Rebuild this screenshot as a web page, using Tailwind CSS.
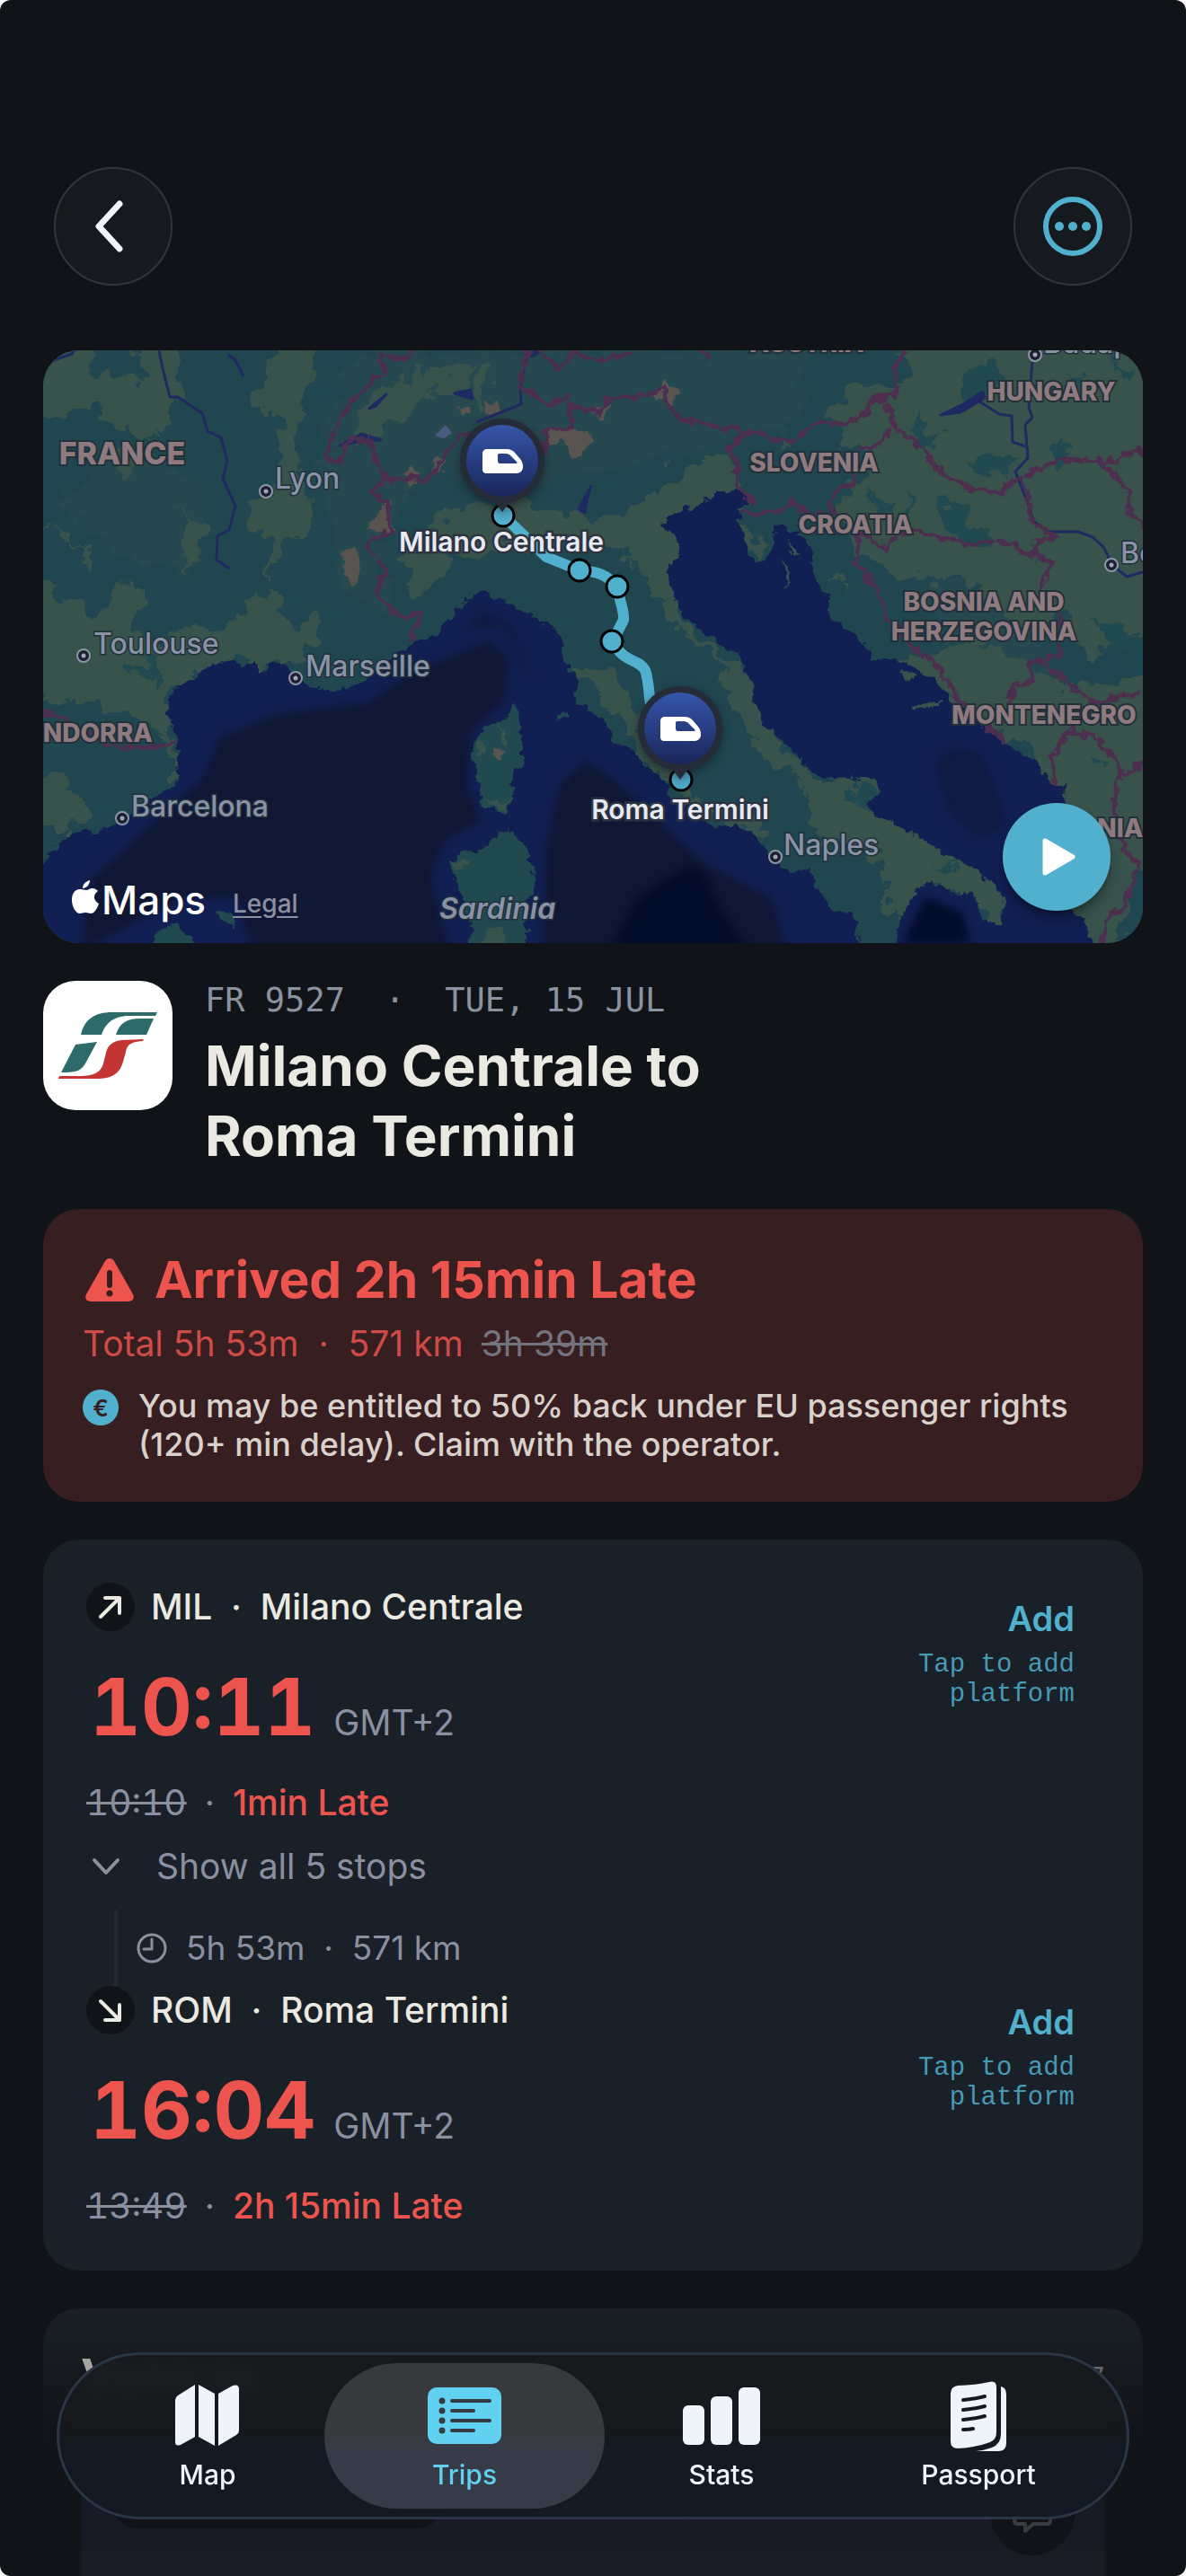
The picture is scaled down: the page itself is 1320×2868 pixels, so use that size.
<!DOCTYPE html>
<html lang="en">
<head>
    <meta charset="UTF-8">
    <meta name="viewport" content="width=device-width, initial-scale=1.0">
    <title>FR 9527</title>
    <script src="https://cdn.jsdelivr.net/npm/@tailwindcss/browser@4"></script>
</head>
<body class="bg-white font-['Inter','Liberation_Sans',sans-serif]">
<div class="flex min-h-screen flex-col overflow-hidden rounded-xl bg-[#101418] px-12 text-[#eae9e2]">

    <header class="flex items-center justify-between px-3 pt-[186px] pb-[72px]">
        <button aria-label="Back" class="flex size-[132px] items-center justify-center rounded-full border-2 border-[#2f363d] bg-[#16191d]">
            <svg class="size-[72px]" viewBox="0 0 72 72" fill="none" stroke="#f1f4fa" stroke-width="7" stroke-linecap="round" stroke-linejoin="round"><path d="M43 11 20 36 43 61"/></svg>
        </button>
        <button aria-label="More" class="flex size-[132px] items-center justify-center rounded-full border-2 border-[#2f363d] bg-[#16191d]">
            <svg class="size-[72px]" viewBox="0 0 72 72"><circle cx="36" cy="36" r="30" fill="none" stroke="#52b0cf" stroke-width="6"/><g fill="#52b0cf"><circle cx="21" cy="36" r="5"/><circle cx="36" cy="36" r="5"/><circle cx="51" cy="36" r="5"/></g></svg>
        </button>
    </header>

    <main class="flex grow flex-col">
        <!-- route map -->
        <section class="relative overflow-hidden rounded-[40px] bg-[#1f464f]">
            <svg class="block h-auto w-full" viewBox="48 390 1224 660" role="img" aria-label="Route map">
                <defs>
                    <filter id="rough" x="-5%" y="-5%" width="110%" height="110%" color-interpolation-filters="sRGB"><feTurbulence type="fractalNoise" baseFrequency=".04" numOctaves="4" seed="4"/><feDisplacementMap in="SourceGraphic" scale="44" xChannelSelector="R" yChannelSelector="G"/></filter>
                    <filter id="coast" x="-5%" y="-5%" width="110%" height="110%" color-interpolation-filters="sRGB"><feTurbulence type="fractalNoise" baseFrequency=".09" numOctaves="3" seed="9"/><feDisplacementMap in="SourceGraphic" scale="14" xChannelSelector="R" yChannelSelector="G"/></filter>
                    <filter id="soft" x="-10%" y="-10%" width="120%" height="120%" color-interpolation-filters="sRGB"><feGaussianBlur stdDeviation="5"/></filter>
                    <filter id="glow" x="-30%" y="-30%" width="160%" height="160%" color-interpolation-filters="sRGB"><feDropShadow dx="0" dy="4" stdDeviation="6" flood-color="#0b1018" flood-opacity=".5"/></filter>
                    <linearGradient id="pin" x1="0" y1="0" x2="0" y2="1"><stop offset="0" stop-color="#3655aa"/><stop offset="1" stop-color="#1a2659"/></linearGradient>
                    <g id="train">
                        <path d="M-9 45 0 57 9 45Z" fill="#262b38"/>
                        <circle r="47" fill="#262b38"/>
                        <circle r="40" fill="url(#pin)"/>
                        <path fill="#fff" fill-rule="evenodd" d="M-17-13H5C9-13 11-12 14-9L20-2C23 2 23 5 23 7 23 11 20 14 16 14H-17C-21 14-22 12-22 9V-8C-22-11-20-13-17-13ZM-3-8C-5-8-5-7-5-6V0C-5 2-4 3-3 3H15C17 3 17 2 16 1L9-6C8-7 6-8 4-8Z"/>
                    </g>
                    <g id="town"><circle r="7" fill="#1c2030" stroke="#8e97a8" stroke-width="2"/><circle r="2.500" fill="#a0a8b8"/></g>
                </defs>
                <path fill="#204750" d="M0 340H1320V1100H0Z"/>
                <path fill="#26494f" filter="url(#rough)" d="M400 390H900L890 470 780 500 600 540 480 520 420 600 440 700 380 650 350 500ZM60 560 140 500 230 540 220 640 140 620ZM1030 640 1150 680 1180 800 1080 760Z"/>
                <!-- lowlands -->
                <g fill="#38534c" filter="url(#rough)">
                    <path d="M30 370H100L104 415 152 420 160 380H206L195 440 185 475 165 490 120 465 90 450 60 462 30 455ZM130 500 165 495 160 520 140 525ZM50 585 80 590 84 605 60 605ZM205 560 222 600 214 640 204 600ZM84 605 106 625 100 640 84 625ZM140 640 150 655 145 665Z"/>
                    <path d="M305 380 347 385 350 423 335 463 328 520 347 567 330 590 309 620 297 655 301 597 276 570 308 545 314 470 288 447Z"/>
                    <path d="M30 625 74 663 111 692 132 645 160 670 140 700 180 716 220 690 242 713 276 670 309 655 330 700 350 680 372 690 350 715 330 745 250 740 190 775 200 830 170 800 120 790 30 770Z"/>
                    <path d="M394 480 419 443 461 417 516 405 530 420 478 435 444 462 419 480ZM540 395 552 430 540 460 530 430Z"/>
                    <path d="M444 613 482 577 516 567 587 558 640 575 700 570 745 533 796 507 820 520 830 560 760 580 765 700 834 753 865 820 900 865 975 862 985 905 1100 970 1130 1010 1115 1050 1082 1000 1036 985 1006 1030 985 990 985 955 905 935 900 880 850 840 830 800 800 740 740 690 715 640 690 612 620 600 560 610 490 630 482 668 462 655Z"/>
                    <path d="M640 740 665 780 690 800 725 855 770 900 850 935 850 915 780 890 722 830 700 770 680 740Z"/>
                    <path d="M1010 370H1300V700L1210 725 1180 690 1130 700 1080 650 1000 640 950 610 938 570 965 520 940 480 925 460 955 425 1000 440Z"/>
                    <path d="M1000 740 1080 710 1190 770 1300 750V890L1240 1060H1200L1180 900 1150 840 1080 795ZM875 480 885 495 870 500ZM928 640 940 650 932 660ZM826 585 850 600 844 630 830 610Z"/>
                    <path d="M30 870 88 873 100 890 80 925 30 915ZM185 820 200 830 205 870 190 860ZM60 940 75 925 80 930Z"/>
                </g>
                <g fill="#204a50" filter="url(#rough)">
                    <path d="M1060 430 1100 400 1120 410 1100 440 1070 450ZM1020 460 1050 480 1030 500 1015 480ZM1078 510 1110 500 1130 520 1090 530ZM1160 500 1180 485 1195 510 1175 520ZM1035 545 1100 590 1110 605 1070 610 1045 580ZM970 550 985 560 980 580 965 570ZM1010 550 1020 565 1010 575ZM1190 410 1210 420 1200 440ZM1215 690 1260 700 1270 740 1240 720ZM140 740 190 735 170 760ZM950 870 980 880 970 895 945 890ZM1045 960 1065 965 1055 975ZM1220 840 1235 845 1230 860ZM1240 400 1260 410 1250 420Z"/>
                </g>
                <!-- high peaks -->
                <g fill="#595450" filter="url(#coast)">
                    <path d="M431 556 440 590 424 594 408 588 420 572ZM380 612 398 610 402 636 394 650 384 640ZM449 525 460 520 466 534 454 544ZM484 510 498 506 492 524 478 530ZM510 453 524 450 526 462 512 460ZM536 450 558 448 556 460 540 462ZM606 475 640 478 660 488 640 510 626 490 606 500ZM655 456 680 450 670 468ZM724 440 742 424 758 436 744 450Z"/>
                </g>
                <!-- seas -->
                <g fill="#121f52" filter="url(#coast)">
                    <path d="M20 985 59 950 80 928 107 925 135 917 166 890 200 873 196 843 198 827 189 807 187 780 191 770 217 755 229 743 246 735 267 740 280 735 288 747 309 737 326 747 343 763 377 771 402 760 419 747 436 733 461 715 486 707 501 690 516 670 535 660 553 665 579 680 604 693 623 703 627 720 629 740 642 753 640 780 659 793 676 807 680 827 703 833 720 853 743 870 747 887 770 900 796 920 821 920 838 927 846 943 863 957 876 970 901 968 909 990 926 1013 951 1018 960 1080H20Z"/>
                    <path d="M1002 1080 998 1040 1006 1013 1019 990 1036 980 1061 995 1082 997 1095 1023 1109 1033 1120 1010 1113 993 1090 970 1052 950 1015 927 977 910 964 893 979 880 972 865 943 867 914 865 897 853 884 837 855 813 842 787 834 753 825 733 800 717 787 707 762 690 752 670 745 647 743 628 760 618 749 597 737 583 745 573 775 563 796 550 821 545 836 557 821 567 823 587 831 610 842 628 850 623 861 607 865 583 884 593 903 607 905 630 909 650 926 667 920 680 943 703 964 718 972 735 998 735 1036 753 1057 777 1082 800 1120 827 1158 850 1170 873 1185 873 1187 897 1187 1010 1208 1023 1212 1043 1221 1080Z"/>
                </g>
                <g filter="url(#soft)">
                    <path fill="#101734" d="M225 867 246 820 309 795 410 782 461 748 545 713 566 735 562 780 524 815 520 877 536 915 495 935 480 977 500 1060H280L265 1000 200 1000 90 1060 100 980 150 935ZM604 1060 608 943 621 877 650 847 682 867 745 925 783 960 859 1000 876 1060Z"/>
                    <path fill="#101a42" d="M520 700 535 678 570 695 590 760 560 700ZM1040 850 1060 832 1090 836 1110 880 1120 920 1090 935 1055 905Z"/>
                    <path fill="#020b29" d="M678 1060 707 1003 733 983 770 963 785 973 800 1007 834 1060ZM1005 1050 1030 1000 1070 1015 1080 1050Z"/>
                </g>
                <g fill="#204a50" filter="url(#coast)">
                    <path d="M572 782 577 797 581 817 581 853 572 860 570 890 560 907 539 897 532 870 528 850 526 827 541 810 562 802 568 790ZM564 923 583 940 589 957 598 980 587 1003 587 1080H520L524 1030 509 987 501 957 541 943ZM156 1080 179 1032 196 1030 213 1043 213 1080ZM240 1017 255 1017 265 1032 252 1028ZM617 797 634 794 632 799 620 801Z"/>
                    <path fill="#38534c" d="M556 806 566 815 560 835ZM530 828 540 825 534 848ZM541 890 568 892 558 904ZM503 957 520 958 510 970ZM876 600 890 620 884 622ZM870 620 880 640 876 655ZM998 747 1015 748 1018 756 1004 757ZM1013 784 1050 780 1046 786 1018 788ZM1212 1028 1224 1034 1216 1044ZM545 1034 560 1030 560 1060H530Z"/>
                    <path fill="#595450" d="M553 832 562 838 556 846 548 842Z"/>
                </g>
                <!-- rivers and lakes -->
                <g fill="none" stroke="#1f2a63" stroke-width="3" stroke-linejoin="round">
                    <path d="M177 390 181 410 189 442H198L225 460 231 480 246 487 253 513 248 533 262 563 255 590 242 597 241 623 255 633M254 395 262 401 271 419M48 405 80 394 84 388M587 395 579 430 580 450 530 470"/>
                    <path d="M1149 403 1145 453 1149 465 1141 473 1144 510 1130 525 1145 563 1150 580 1166 592H1200L1216 598 1229 610 1237 628 1254 642 1272 637M1090 447 1112 461 1126 463 1127 492 1141 497"/>
                    <path fill="#1f2a63" d="M1047 462 1072 450 1094 436 1096 443 1069 459ZM378 496 402 483 424 490 402 491ZM411 455 430 439 418 452ZM658 541 644 567 651 571 654 553ZM583 391H602L592 397ZM506 438 524 434 526 444Z"/>
                    <path fill="#4b5a80" stroke="none" d="M484 485 496 473 503 482 494 488Z"/>
                </g>
                <!-- country borders -->
                <g fill="none" stroke="#4c2f4f" stroke-width="5" stroke-linejoin="round" filter="url(#coast)">
                    <path d="M457 713 469 683 448 687 423 667 419 647 431 637 406 607 436 590 431 563 415 547 429 533 415 503 410 487 389 490 377 513 364 513 372 477 394 443 429 410 421 403 427 395 452 400 461 385"/>
                    <path d="M429 533 478 533 495 507 511 487 550 480 600 495 608 507V477H636L633 450 667 460 678 443 716 440 741 432 739 447 758 467 829 480 880 492 909 470 939 472 964 463 970 445 998 440 996 407 1010 385M587 385 579 430 612 452 633 440M600 385 621 413 640 393 667 403 703 393M778 390 790 400"/>
                    <path d="M829 480 810 500 825 517 817 527 823 543 842 562M823 572 867 570 882 557 897 573 926 573V550L949 538 954 503 985 490 989 477M985 447 998 480 1019 493 1048 527 1078 543 1111 550 1132 533 1179 512 1246 513 1263 500 1280 505M1225 513 1257 547V570L1280 592"/>
                    <path d="M1137 533 1145 563 1149 580 1175 597 1153 603V620L1137 617 1128 603 1082 607 1027 592 998 593 987 613 968 597 954 593V627L977 657 985 687 1015 717 1044 743 1069 783 1120 827M1153 617 1170 627 1158 660 1183 690 1179 730 1145 737 1149 757 1128 763 1116 807M1162 738 1191 763 1221 783 1270 770M1221 783 1191 813 1170 843 1172 873M1191 813 1217 820 1246 853 1238 900 1250 943 1267 963 1250 1010 1229 1027 1225 1060M1246 867 1280 845M40 790 78 803 124 830 166 833 196 827"/>
                </g>

                <path d="M560 574 587 600 608 620 645 635C665 636 675 640 687 653 690 672 695 680 694 690L682 714C695 740 710 732 718 746 723 760 722 780 726 795" fill="none" stroke="#52b0cf" stroke-width="12" stroke-linejoin="round"/>

                <g fill="#8f7a80" stroke="#22303a" stroke-width="4" paint-order="stroke" font-size="28" font-weight="800" text-anchor="middle">
                    <text x="136" y="517" font-size="34">FRANCE</text>
                    <text x="898" y="392">AUSTRIA</text>
                    <text x="1170" y="446">HUNGARY</text>
                    <text x="906" y="525">SLOVENIA</text>
                    <text x="952" y="594">CROATIA</text>
                    <text x="1095" y="680">BOSNIA AND</text>
                    <text x="1095" y="713">HERZEGOVINA</text>
                    <text x="1162" y="806">MONTENEGRO</text>
                    <text x="98" y="826">ANDORRA</text>
                    <text x="1208" y="932">ALBANIA</text>
                </g>
                <g fill="#8993a5" stroke="#22303a" stroke-width="3" paint-order="stroke" font-size="32" font-weight="500">
                    <text x="306" y="544">Lyon</text>
                    <text x="104" y="728">Toulouse</text>
                    <text x="340" y="753">Marseille</text>
                    <text x="146" y="909">Barcelona</text>
                    <text x="872" y="952">Naples</text>
                    <text x="1161" y="393">Budapest</text>
                    <text x="1247" y="627">Belgrade</text>
                    <text x="489" y="1023" font-weight="600" font-style="italic">Sardinia</text>
                </g>
                <use href="#town" x="296" y="547"/><use href="#town" x="93" y="730"/><use href="#town" x="329" y="755"/><use href="#town" x="136" y="911"/><use href="#town" x="863" y="954"/><use href="#town" x="1152" y="395"/><use href="#town" x="1237" y="629"/>

                <g fill="#52b0cf" stroke="#000" stroke-width="3"><circle cx="560" cy="574" r="12"/><circle cx="645" cy="635" r="12"/><circle cx="687" cy="653" r="12"/><circle cx="681" cy="714" r="12"/><circle cx="758" cy="868" r="12"/></g>
                <use href="#train" x="559" y="513" filter="url(#glow)"/>
                <use href="#train" x="757" y="811" filter="url(#glow)"/>
                <g fill="#e8eaf2" stroke="#2c3442" stroke-width="5" paint-order="stroke" font-size="30" font-weight="600" text-anchor="middle">
                    <text x="558" y="614">Milano Centrale</text>
                    <text x="757" y="912">Roma Termini</text>
                </g>
                <g fill="#fff">
                    <path d="M100 980C100 985 96 989 92 989 92 984 96 981 100 980ZM96 991C98 991 100 989 103 989 106 989 108 991 109 992 103 996 104 1003 110 1006 108 1012 105 1017 101 1017 99 1017 98 1016 95 1016 92 1016 91 1017 89 1017 84 1017 80 1009 80 1002 80 994 84 990 89 990 92 990 94 991 96 991Z"/>
                    <text x="113" y="1018" font-size="44" font-weight="500">Maps</text>
                </g>
            </svg>
            <a href="#" class="absolute bottom-[28px] left-[211px] text-[28px] leading-8 font-medium text-[#8b90a0] underline underline-offset-4">Legal</a>
            <button aria-label="Play trip" class="absolute right-9 bottom-9 flex size-[120px] items-center justify-center rounded-full bg-[#52b0cf] shadow-lg shadow-black/40">
                <svg class="size-[60px]" viewBox="0 0 60 60" fill="#fff" stroke="#fff" stroke-width="5" stroke-linejoin="round"><path d="M17 12V48L48 30Z"/></svg>
            </button>
        </section>

        <!-- train and route -->
        <section class="mt-[42px] flex gap-9">
            <div class="size-[144px] shrink-0 rounded-[36px] bg-white">
                <svg class="size-full" viewBox="0 0 144 144">
                    <g fill="#2d6a6a"><path d="M127 35H77C57 35 46 43 42 60H65C70 46 79 39 97 39H125Z"/><path d="M123 42H108C93 42 85 47 81 60H115Z"/><path d="M36 71 60 68 47 92C42 100 38 102 20 102Z"/></g>
                    <path fill="#c43432" d="M112 65 88 66C77 67 72 72 70 80L67 92C64 102 57 106 40 106H18L17 109H59C76 109 85 104 89 90L92 79C94 71 97 68 111 67Z"/>
                </svg>
            </div>
            <div>
                <p class="font-['DejaVu_Sans_Mono','Liberation_Mono',monospace] text-[37px] leading-[44px] whitespace-pre text-[#8b92a0]">FR 9527  ·  TUE, 15 JUL</p>
                <h1 class="mt-3 text-[62px] leading-[78px] font-bold">Milano Centrale to<br>Roma Termini</h1>
            </div>
        </section>

        <!-- delay notice -->
        <section class="mt-[42px] rounded-[40px] bg-[#371e21] px-11 pt-[43px] pb-[42px]">
            <h2 class="flex items-center gap-5 text-[57px] leading-[72px] font-bold text-[#ed544d]">
                <svg class="size-[60px] shrink-0" viewBox="0 0 60 60"><path fill="#ed544d" d="M25 9C27 5 33 5 35 9L56 46C58 50 56 54 51 54H9C4 54 2 50 4 46Z"/><path d="M30 22V36" stroke="#371e21" stroke-width="6" stroke-linecap="round"/><circle cx="30" cy="45" r="3.500" fill="#371e21"/></svg>
                Arrived 2h 15min Late
            </h2>
            <p class="mt-[11px] flex gap-5 text-[39px] leading-12 text-[#cf4b47]"><span class="whitespace-pre">Total 5h 53m  ·  571 km</span><s class="text-[#74747e]">3h 39m</s></p>
            <div class="mt-6 flex gap-[22px]">
                <span class="mt-[3px] flex size-10 shrink-0 items-center justify-center rounded-full bg-[#52b0cf] text-[26px] font-semibold text-[#371e21]">€</span>
                <p class="text-[36px] leading-[43px] font-medium text-[#d8d2cb]">You may be entitled to 50% back under EU passenger rights<br>(120+ min delay). Claim with the operator.</p>
            </div>
        </section>

        <!-- departure and arrival -->
        <section class="mt-[42px] rounded-[40px] bg-[#1a2027] p-12 text-[39px] leading-12">
            <div class="flex items-start justify-between">
                <div>
                    <h3 class="flex h-[54px] items-center gap-[18px] font-medium"><svg class="size-[54px]" viewBox="0 0 54 54"><circle cx="27" cy="27" r="27" fill="#101418"/><path d="M16 38 37 17M21 17H37V34" fill="none" stroke="#eae9e2" stroke-width="4" stroke-linecap="round" stroke-linejoin="round"/></svg><span class="whitespace-pre">MIL  ·  Milano Centrale</span></h3>
                    <p class="mt-[34px] flex items-baseline gap-5 pl-1"><time class="text-[88px] leading-[100px] font-bold text-[#ed544d] tabular-nums">10:11</time><span class="text-[#8b90a0]">GMT+2</span></p>
                    <p class="mt-[33px] flex gap-5 text-[#8b90a0]"><s class="tabular-nums">10:10</s><span>·</span><span class="font-medium text-[#ed544d]">1min Late</span></p>
                </div>
                <button class="mr-7 pt-4 text-right text-[#52b0cf]">
                    <span class="block text-[38px] font-semibold">Add</span>
                    <span class="mt-[11px] block font-['Liberation_Mono',monospace] text-[29px] leading-[33px] text-[#4799b4]">Tap to add<br>platform</span>
                </button>
            </div>
            <button class="mt-[23px] flex items-center gap-[34px] text-[#8b90a0]"><svg class="size-11" viewBox="0 0 44 44" fill="none" stroke="#8b90a0" stroke-width="4" stroke-linecap="round" stroke-linejoin="round"><path d="M9 15 22 29 35 15"/></svg>Show all 5 stops</button>
            <div class="mt-[25px] ml-[31px] flex h-[84px] items-center gap-5 border-l-4 border-[#252a33] pl-5 text-[37px] text-[#8b90a0]">
                <svg class="size-9" viewBox="0 0 36 36" fill="none" stroke="#8b90a0" stroke-width="3" stroke-linecap="round" stroke-linejoin="round"><circle cx="18" cy="18" r="15"/><path d="M18 8V19H9"/></svg>
                <span class="whitespace-pre">5h 53m  ·  571 km</span>
            </div>
            <div class="flex items-start justify-between">
                <div>
                    <h3 class="flex h-[54px] items-center gap-[18px] font-medium"><svg class="size-[54px]" viewBox="0 0 54 54"><circle cx="27" cy="27" r="27" fill="#101418"/><path d="M16 17 37 38M21 38H37V21" fill="none" stroke="#eae9e2" stroke-width="4" stroke-linecap="round" stroke-linejoin="round"/></svg><span class="whitespace-pre">ROM  ·  Roma Termini</span></h3>
                    <p class="mt-[34px] flex items-baseline gap-5 pl-1"><time class="text-[88px] leading-[100px] font-bold text-[#ed544d] tabular-nums">16:04</time><span class="text-[#8b90a0]">GMT+2</span></p>
                    <p class="mt-[33px] flex gap-5 text-[#8b90a0]"><s class="tabular-nums">13:49</s><span>·</span><span class="font-medium text-[#ed544d]">2h 15min Late</span></p>
                </div>
                <button class="mr-7 pt-4 text-right text-[#52b0cf]">
                    <span class="block text-[38px] font-semibold">Add</span>
                    <span class="mt-[11px] block font-['Liberation_Mono',monospace] text-[29px] leading-[33px] text-[#4799b4]">Tap to add<br>platform</span>
                </button>
            </div>
        </section>

        <!-- vehicle card, runs on under the tab bar -->
        <section class="mt-[42px] flex grow flex-col rounded-t-[40px] bg-linear-to-b from-[#1a1f27] to-[#111418] to-50% px-[42px] pt-11">
            <div class="flex items-center justify-between">
                <h2 class="text-[54px] leading-[64px] font-bold text-[#a5a5a2]">Vehicle</h2>
                <span class="font-['DejaVu_Sans_Mono',monospace] text-[30px] text-[#61666f]">FR 9527</span>
            </div>
            <div class="mt-10 flex h-[130px] grow items-start justify-between bg-linear-to-b from-[#131a24] to-[#1a1b25] px-[34px] pt-[33px]">
                <div class="h-16 w-[370px] rounded-[30px] bg-[#101319]"></div>
                <div class="flex size-[94px] items-center justify-center rounded-full bg-[#101319]">
                    <svg class="size-12" viewBox="0 0 48 48" fill="none" stroke="#393b3e" stroke-width="4" stroke-linejoin="round"><path d="M8 6H40Q44 6 44 10V32Q44 36 40 36H25L16 44V36H8Q4 36 4 32V10Q4 6 8 6Z"/></svg>
                </div>
            </div>
        </section>
    </main>

    <nav class="fixed inset-x-[63px] bottom-[63px] grid h-[186px] grid-cols-4 rounded-full border-3 border-[#2a3646] bg-linear-to-b from-[#16191df2] from-50% to-[#131a24f5] to-56% px-[22px] py-[9px] text-[30px] leading-9 font-medium text-[#eff3fa] backdrop-blur-sm">
        <button class="flex flex-col items-center gap-[7px] pt-[17px]">
            <svg class="h-[82px] w-[86px]" viewBox="0 0 86 82" fill="#eff3fa"><path d="M7 24Q7 21 10 19L29 7V65L13 74Q7 76 7 71ZM33 7 51 17V75L33 65ZM55 17 71 8Q78 6 78 12V58Q78 61 75 63L55 75Z"/></svg>
            Map
        </button>
        <button aria-current="page" class="-mx-[13px] flex flex-col items-center gap-[7px] rounded-[81px] bg-linear-to-b from-[#38393c] from-45% to-[#363b47] to-60% pt-[17px] text-[#62d0f0]">
            <svg class="h-[82px] w-[86px]" viewBox="0 0 86 82"><rect x="2" y="10" width="82" height="63" rx="10" fill="#62d0f0"/><g stroke="#373a40" stroke-width="4" stroke-linecap="round"><path d="M29 25H71M29 36H53M29 47H71M29 58H53"/></g><g fill="#373a40"><circle cx="18" cy="25" r="3.500"/><circle cx="18" cy="36" r="3.500"/><circle cx="18" cy="47" r="3.500"/><circle cx="18" cy="58" r="3.500"/></g></svg>
            Trips
        </button>
        <button class="flex flex-col items-center gap-[7px] pt-[17px]">
            <svg class="h-[82px] w-[86px]" viewBox="0 0 86 82" fill="#eff3fa"><rect y="30" width="24" height="44" rx="6"/><rect x="31" y="20" width="24" height="54" rx="6"/><rect x="62" y="10" width="24" height="64" rx="6"/></svg>
            Stats
        </button>
        <button class="flex flex-col items-center gap-[7px] pt-[17px]">
            <svg class="h-[82px] w-[86px]" viewBox="0 0 86 82"><path fill="#eff3fa" d="M12 17Q12 9 20 8 38 8 55 4 63 2 63 10V60Q63 68 56 71 40 77 20 78 12 78 12 70Z"/><path fill="#eff3fa" d="M68 9Q74 10 74 18V72Q74 81 65 81H40Q50 80 58 77 68 73 68 62Z"/><path d="M26 24Q38 23 50 20M26 35Q38 34 50 31M26 46Q38 45 50 42M26 57Q32 57 37 56" fill="none" stroke="#16191d" stroke-width="4" stroke-linecap="round"/></svg>
            Passport
        </button>
    </nav>
</div>
</body>
</html>
